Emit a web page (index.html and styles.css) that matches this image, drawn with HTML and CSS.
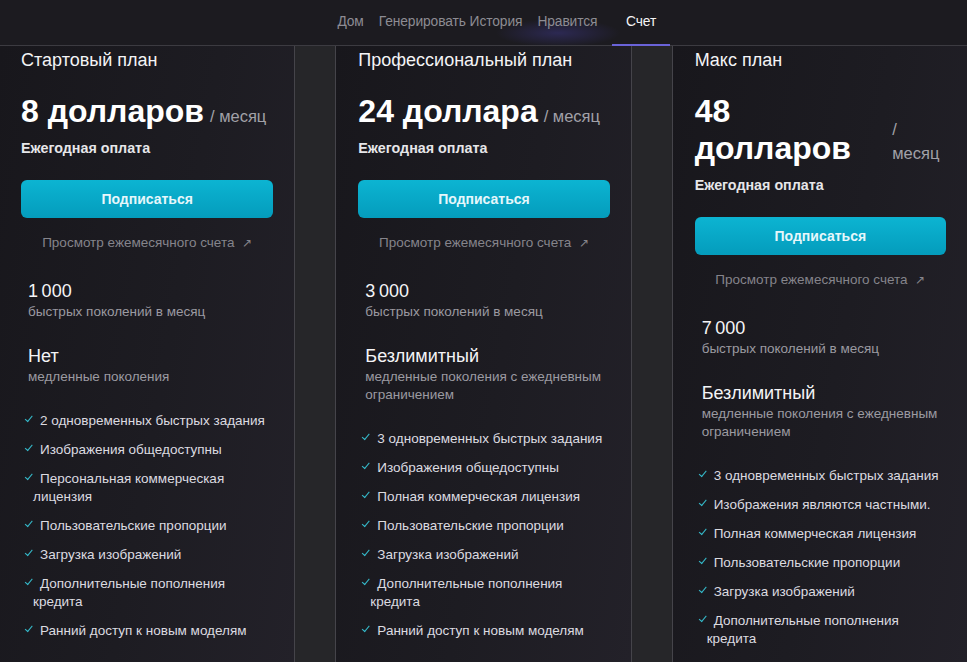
FILE: index.html
```html
<!DOCTYPE html>
<html lang="ru">
<head>
<meta charset="utf-8">
<title>Счет</title>
<link rel="stylesheet" href="styles.css">
</head>
<body>
<nav class="topnav">
  <a class="nav-item">Дом</a>
  <a class="nav-item">Генерировать История</a>
  <a class="nav-item">Нравится</a>
  <a class="nav-item active">Счет</a>
</nav>
<main class="plans">
  <section class="card">
    <h2 class="plan-name">Стартовый план</h2>
    <div class="price-row"><span class="price">8 долларов</span><span class="per">/ месяц</span></div>
    <p class="billing">Ежегодная оплата</p>
    <button class="subscribe">Подписаться</button>
    <a class="monthly">Просмотр ежемесячного счета <span class="arrow">↗</span></a>
    <div class="stat"><div class="stat-value">1&#8239;000</div><div class="stat-label">быстрых поколений в месяц</div></div>
    <div class="stat"><div class="stat-value">Нет</div><div class="stat-label">медленные поколения</div></div>
    <ul class="features">
      <li><span class="check"></span>2 одновременных быстрых задания</li>
      <li><span class="check"></span>Изображения общедоступны</li>
      <li><span class="check"></span>Персональная коммерческая лицензия</li>
      <li><span class="check"></span>Пользовательские пропорции</li>
      <li><span class="check"></span>Загрузка изображений</li>
      <li><span class="check"></span>Дополнительные пополнения кредита</li>
      <li><span class="check"></span>Ранний доступ к новым моделям</li>
    </ul>
  </section>
  <div class="divider"></div>
  <section class="card">
    <h2 class="plan-name">Профессиональный план</h2>
    <div class="price-row"><span class="price">24 доллара</span><span class="per">/ месяц</span></div>
    <p class="billing">Ежегодная оплата</p>
    <button class="subscribe">Подписаться</button>
    <a class="monthly">Просмотр ежемесячного счета <span class="arrow">↗</span></a>
    <div class="stat"><div class="stat-value">3&#8239;000</div><div class="stat-label">быстрых поколений в месяц</div></div>
    <div class="stat"><div class="stat-value">Безлимитный</div><div class="stat-label">медленные поколения с ежедневным ограничением</div></div>
    <ul class="features">
      <li><span class="check"></span>3 одновременных быстрых задания</li>
      <li><span class="check"></span>Изображения общедоступны</li>
      <li><span class="check"></span>Полная коммерческая лицензия</li>
      <li><span class="check"></span>Пользовательские пропорции</li>
      <li><span class="check"></span>Загрузка изображений</li>
      <li><span class="check"></span>Дополнительные пополнения кредита</li>
      <li><span class="check"></span>Ранний доступ к новым моделям</li>
    </ul>
  </section>
  <div class="divider"></div>
  <section class="card">
    <h2 class="plan-name">Макс план</h2>
    <div class="price-row"><span class="price">48 долларов</span><span class="per">/ месяц</span></div>
    <p class="billing">Ежегодная оплата</p>
    <button class="subscribe">Подписаться</button>
    <a class="monthly">Просмотр ежемесячного счета <span class="arrow">↗</span></a>
    <div class="stat"><div class="stat-value">7&#8239;000</div><div class="stat-label">быстрых поколений в месяц</div></div>
    <div class="stat"><div class="stat-value">Безлимитный</div><div class="stat-label">медленные поколения с ежедневным ограничением</div></div>
    <ul class="features">
      <li><span class="check"></span>3 одновременных быстрых задания</li>
      <li><span class="check"></span>Изображения являются частными.</li>
      <li><span class="check"></span>Полная коммерческая лицензия</li>
      <li><span class="check"></span>Пользовательские пропорции</li>
      <li><span class="check"></span>Загрузка изображений</li>
      <li><span class="check"></span>Дополнительные пополнения кредита</li>
    </ul>
  </section>
</main>
</body>
</html>
```
FILE: styles.css
```css
* { box-sizing: border-box; }
html, body { margin: 0; padding: 0; }
body {
  background: #1b1a1f;
  font-family: "Liberation Sans", Arial, sans-serif;
  color: #f2f2f4;
  width: 967px;
  height: 662px;
  overflow: hidden;
}
.topnav {
  height: 46px;
  border-bottom: 1px solid #3c3b41;
  display: flex;
  align-items: center;
  justify-content: center;
  padding-left: 33px;
  background-color: #1c1b20;
  background-image: radial-gradient(ellipse 62px 14px at 558px 33px, rgba(78, 70, 190, 0.32), rgba(78, 70, 190, 0) 100%);
}
.nav-item {
  position: relative;
  font-size: 13.8px;
  color: #8d8c93;
  padding: 0 7.5px;
  height: 45px;
  line-height: 43px;
  letter-spacing: -0.1px;
}
.nav-item.active {
  color: #f4f4f6;
  padding: 0 14px;
  margin-left: 7px;
}
.nav-item.active::after {
  content: "";
  position: absolute;
  left: 0;
  right: 0;
  bottom: -1px;
  height: 2px;
  background: #6a63d8;
}
.plans {
  display: grid;
  grid-template-columns: 1fr 42px 1fr 42px 1fr;
  height: 616px;
}
.divider {
  background: #262629;
  border-left: 1px solid #45444a;
  border-right: 1px solid #45444a;
}
.card {
  padding: 4px 21px 0 22px;
  background: linear-gradient(100deg, #18171c 0%, #1d1c22 55%, #232129 100%);
  overflow: hidden;
}
.card:first-child {
  padding-left: 21px;
}
.plan-name {
  margin: 0;
  font-size: 18px;
  font-weight: normal;
  line-height: 20px;
  color: #f4f4f6;
}
.price-row {
  display: flex;
  align-items: last baseline;
  margin-top: 23px;
}
.price {
  font-size: 32px;
  font-weight: bold;
  line-height: 37px;
  color: #ffffff;
}
.per {
  font-size: 16.5px;
  color: #a2a1a8;
  margin-left: 6px;
  line-height: 24px;
}
.billing {
  margin: 9px 0 0 0;
  font-size: 14.3px;
  font-weight: bold;
  line-height: 18px;
  color: #e6e6e9;
}
.subscribe {
  display: block;
  width: 100%;
  height: 38px;
  margin-top: 23px;
  border: none;
  border-radius: 6px;
  background: linear-gradient(180deg, #0cb4d2 0%, #049cbc 100%);
  color: #e6f7fb;
  font-family: inherit;
  font-size: 14px;
  font-weight: bold;
}
.monthly {
  display: block;
  margin-top: 16px;
  text-align: center;
  font-size: 13.5px;
  line-height: 18px;
  color: #85848b;
}
.arrow {
  font-size: 12px;
  margin-left: 4px;
}
.stat {
  margin-top: 28px;
  padding-left: 7px;
}
.stat + .stat {
  margin-top: 24px;
}
.stat-value {
  font-size: 18px;
  line-height: 23px;
  color: #f4f4f6;
}
.stat-label {
  font-size: 13.5px;
  line-height: 18px;
  color: #9b9aa1;
}
.features {
  list-style: none;
  margin: 26px 0 0 0;
  padding: 0 0 0 12px;
  display: flex;
  flex-direction: column;
  gap: 11px;
}
.features li {
  font-size: 13.5px;
  line-height: 18px;
  color: #dcdbe0;
}
.check {
  display: inline-block;
  margin-left: -8px;
  margin-right: 8px;
  vertical-align: 6px;
  border-left: 1.4px solid #35b9c9;
  border-bottom: 1.4px solid #35b9c9;
  transform: rotate(-50deg) scaleX(1.1);
  transform-origin: center;
  width: 7px;
  height: 3.5px;
}
```
